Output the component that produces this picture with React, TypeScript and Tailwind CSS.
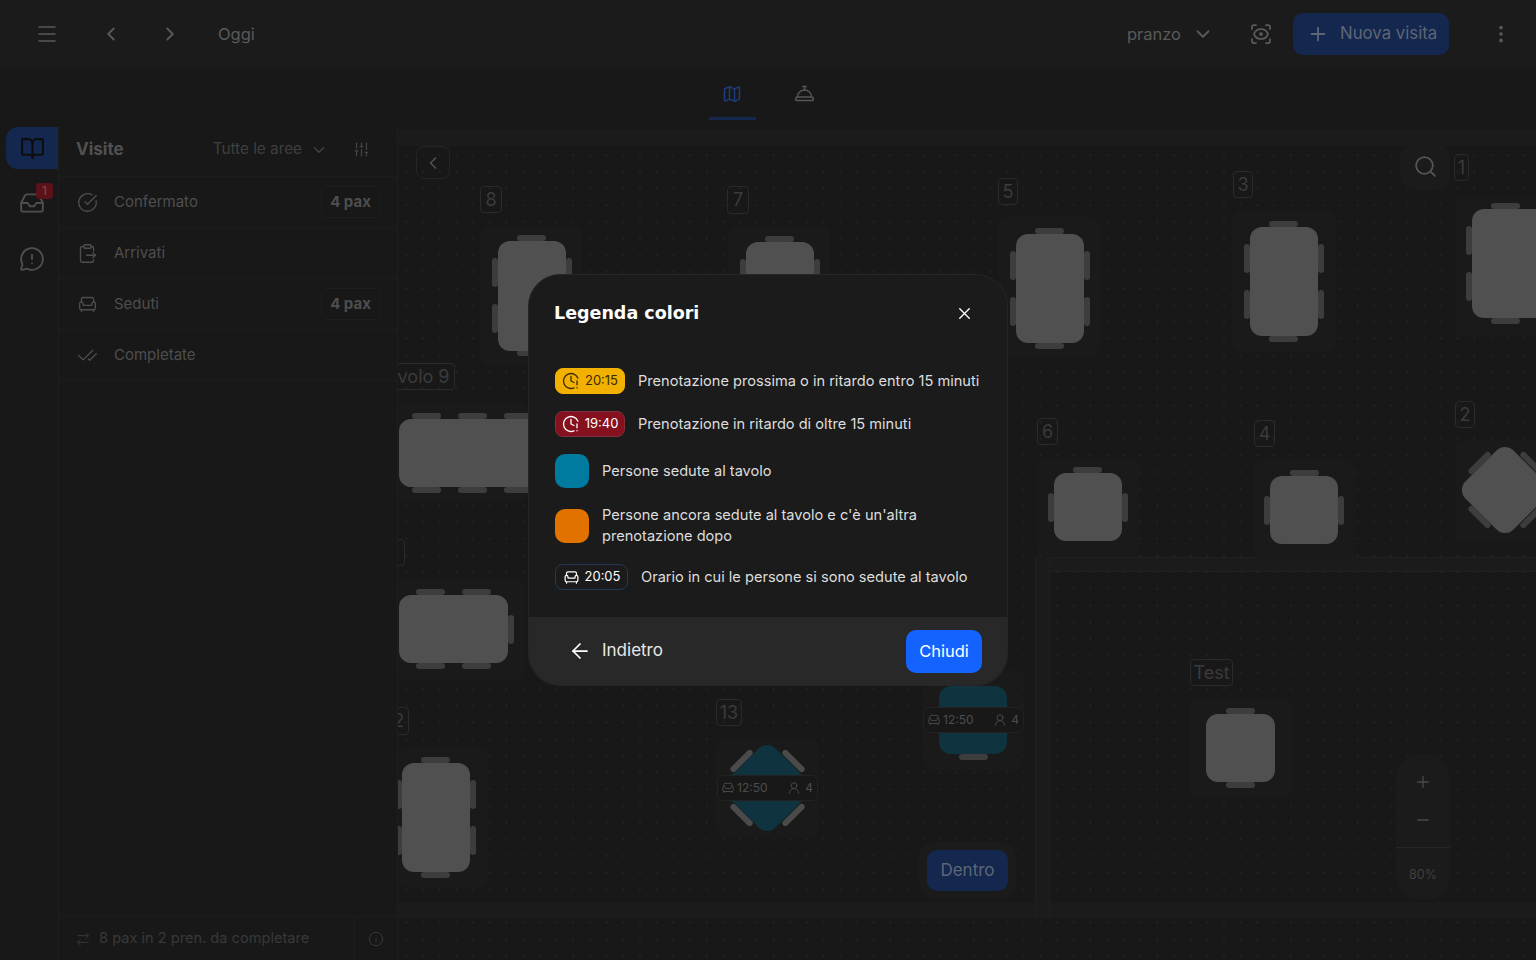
import {
  ArrowLeft,
  ArrowRightLeft,
  Armchair,
  BookOpen,
  CheckCheck,
  ChevronDown,
  ChevronLeft,
  ChevronRight,
  CircleCheckBig,
  ClockAlert,
  ConciergeBell,
  EllipsisVertical,
  Inbox,
  Info,
  Map as MapIcon,
  Menu,
  MessageCircleWarning,
  Minus,
  Plus,
  ScanEye,
  Search,
  SlidersVertical,
  UserRound,
  X,
} from "lucide-react";

// canvas starts at x=398, y=130 of the page
const OX = 398;
const OY = 130;

type Box = { x: number; y: number; w: number; h: number };

type Table = {
  label?: string;
  labelBox?: Box;
  tile: Box;
  top: Box;
  chairs: { x: number; y: number; side?: boolean }[];
  teal?: boolean;
};

const tall = (x: number, y: number) => [
  { x: x + 19, y: y - 6 },
  { x: x + 19, y: y + 109 },
  { x: x - 6, y: y + 17, side: true },
  { x: x - 6, y: y + 63, side: true },
  { x: x + 68, y: y + 17, side: true },
  { x: x + 68, y: y + 63, side: true },
];

const tables: Table[] = [
  {
    label: "8",
    labelBox: { x: 480, y: 186, w: 22, h: 27 },
    tile: { x: 480, y: 226, w: 102, h: 140 },
    top: { x: 498, y: 241, w: 68, h: 110 },
    chairs: tall(498, 241),
  },
  {
    label: "7",
    labelBox: { x: 727, y: 186, w: 22, h: 28 },
    tile: { x: 728, y: 226, w: 102, h: 60 },
    top: { x: 746, y: 242, w: 68, h: 110 },
    chairs: tall(746, 242),
  },
  {
    label: "5",
    labelBox: { x: 998, y: 178, w: 20, h: 27 },
    tile: { x: 998, y: 217, w: 102, h: 141 },
    top: { x: 1016, y: 234, w: 68, h: 109 },
    chairs: tall(1016, 234),
  },
  {
    label: "3",
    labelBox: { x: 1233, y: 171, w: 20, h: 27 },
    tile: { x: 1233, y: 210, w: 102, h: 142 },
    top: { x: 1250, y: 227, w: 68, h: 109 },
    chairs: tall(1250, 227),
  },
  {
    label: "1",
    labelBox: { x: 1454, y: 154, w: 15, h: 27 },
    tile: { x: 1455, y: 197, w: 102, h: 140 },
    top: { x: 1472, y: 209, w: 90, h: 109 },
    chairs: [
      { x: 1491, y: 203 },
      { x: 1491, y: 318 },
      { x: 1466, y: 226, side: true },
      { x: 1466, y: 272, side: true },
    ],
  },
  {
    label: "6",
    labelBox: { x: 1037, y: 418, w: 21, h: 27 },
    tile: { x: 1037, y: 458, w: 102, h: 98 },
    top: { x: 1054, y: 473, w: 68, h: 68 },
    chairs: [
      { x: 1073, y: 467 },
      { x: 1048, y: 493, side: true },
      { x: 1122, y: 493, side: true },
    ],
  },
  {
    label: "4",
    labelBox: { x: 1254, y: 420, w: 21, h: 27 },
    tile: { x: 1254, y: 460, w: 101, h: 100 },
    top: { x: 1270, y: 476, w: 68, h: 68 },
    chairs: [
      { x: 1290, y: 470 },
      { x: 1264, y: 496, side: true },
      { x: 1338, y: 496, side: true },
    ],
  },
  {
    label: "Test",
    labelBox: { x: 1190, y: 659, w: 43, h: 27 },
    tile: { x: 1190, y: 698, w: 102, h: 100 },
    top: { x: 1206, y: 714, w: 69, h: 68 },
    chairs: [
      { x: 1226, y: 708 },
      { x: 1226, y: 782 },
    ],
  },
  {
    label: "Tavolo 9",
    labelBox: { x: 372, y: 363, w: 83, h: 27 },
    tile: { x: 398, y: 402, w: 130, h: 100 },
    top: { x: 399, y: 419, w: 140, h: 68 },
    chairs: [
      { x: 412, y: 413 },
      { x: 458, y: 413 },
      { x: 504, y: 413 },
      { x: 412, y: 487 },
      { x: 458, y: 487 },
      { x: 504, y: 487 },
    ],
  },
  {
    labelBox: { x: 380, y: 539, w: 25, h: 27 },
    tile: { x: 398, y: 578, w: 127, h: 102 },
    top: { x: 399, y: 595, w: 109, h: 68 },
    chairs: [
      { x: 416, y: 589 },
      { x: 462, y: 589 },
      { x: 416, y: 663 },
      { x: 462, y: 663 },
      { x: 508, y: 615, side: true },
    ],
  },
  {
    label: "12",
    labelBox: { x: 381, y: 707, w: 28, h: 28 },
    tile: { x: 398, y: 747, w: 90, h: 140 },
    top: { x: 402, y: 763, w: 68, h: 109 },
    chairs: tall(402, 763),
  },
  {
    tile: { x: 923, y: 670, w: 100, h: 100 },
    top: { x: 939, y: 686, w: 68, h: 68 },
    chairs: [{ x: 959, y: 754 }],
    teal: true,
  },
];

function TableLabel({ box, text }: { box: Box; text?: string }) {
  return (
    <div
      className="absolute flex items-center justify-center overflow-hidden whitespace-nowrap rounded border border-[#2a2a2a] text-[18px] leading-none text-[#3b3b3b]"
      style={{ left: box.x - OX, top: box.y - OY, width: box.w, height: box.h }}
    >
      {text}
    </div>
  );
}

function FloorTable({ table }: { table: Table }) {
  const { tile, top, chairs, teal, label, labelBox } = table;
  return (
    <>
      {labelBox && <TableLabel box={labelBox} text={label} />}
      <div
        className="absolute rounded-lg bg-[#1a1a1a]"
        style={{ left: tile.x - OX, top: tile.y - OY, width: tile.w, height: tile.h }}
      />
      {chairs.map((c, i) => (
        <div
          key={i}
          className={
            c.side
              ? "absolute h-[29px] w-[6px] rounded-[3px] bg-[#3d3d3d]"
              : "absolute h-[6px] w-[29px] rounded-[3px] bg-[#3d3d3d]"
          }
          style={{ left: c.x - OX, top: c.y - OY }}
        />
      ))}
      <div
        className={teal ? "absolute rounded-xl bg-[#10343f]" : "absolute rounded-xl bg-[#505050]"}
        style={{ left: top.x - OX, top: top.y - OY, width: top.w, height: top.h }}
      />
    </>
  );
}

function Diamond({ cx, cy, teal }: { cx: number; cy: number; teal?: boolean }) {
  const bars = [
    { x: -26, y: -27, r: -45 },
    { x: 26, y: -27, r: 45 },
    { x: -26, y: 27, r: 45 },
    { x: 26, y: 27, r: -45 },
  ];
  return (
    <>
      {bars.map((b, i) => (
        <div
          key={i}
          className={
            teal
              ? "absolute h-[6px] w-[29px] rounded-[3px] bg-[#4a4a4a]"
              : "absolute h-[6px] w-[29px] rounded-[3px] bg-[#3d3d3d]"
          }
          style={{
            left: cx - OX + b.x - 14.5,
            top: cy - OY + b.y - 3,
            transform: `rotate(${b.r}deg)`,
          }}
        />
      ))}
      <div
        className={
          teal
            ? "absolute h-[68px] w-[68px] rotate-45 rounded-xl bg-[#10343f]"
            : "absolute h-[68px] w-[68px] rotate-45 rounded-xl bg-[#505050]"
        }
        style={{ left: cx - OX - 34, top: cy - OY - 34 }}
      />
    </>
  );
}

function SeatChip({ x, y }: { x: number; y: number }) {
  return (
    <div
      className="absolute flex h-[26px] w-[101px] items-center rounded-md border border-[#222222] bg-[#181818] pl-[3px] pr-[4px] text-[12px] text-[#4d4d4d]"
      style={{ left: x - OX, top: y - OY }}
    >
      <Armchair size={14} strokeWidth={1.5} />
      <span className="ml-[2px]">12:50</span>
      <UserRound size={14} strokeWidth={1.5} className="ml-auto" />
      <span className="ml-[4px]">4</span>
    </div>
  );
}

function SideRow({
  icon,
  text,
  pax,
}: {
  icon: React.ReactNode;
  text: string;
  pax?: boolean;
}) {
  return (
    <div className="flex h-[51px] items-center border-b border-[#1d1d1d] px-[17px]">
      <div className="flex w-[22px] justify-center text-[#4e4e4e]">{icon}</div>
      <span className="ml-[16px] text-[15px] text-[#4e4e4e]">{text}</span>
      {pax && (
        <div className="ml-auto flex h-[32px] w-[59px] items-center justify-center rounded-md border border-[#1e1e1e] text-[15px] font-bold text-[#4e4e4e]">
          4 pax
        </div>
      )}
    </div>
  );
}

function LegendPill({
  className,
  icon,
  time,
}: {
  className: string;
  icon: React.ReactNode;
  time: string;
}) {
  return (
    <div
      className={
        "flex h-[26px] shrink-0 items-center justify-center gap-[5px] rounded-lg border text-[13px] " +
        className
      }
    >
      {icon}
      <span>{time}</span>
    </div>
  );
}

function LegendText({ children }: { children: React.ReactNode }) {
  return <p className="text-[14.6px] leading-[21px] text-[#dedede]">{children}</p>;
}

function Legend() {
  return (
    <div className="absolute left-[528px] top-[274px] z-20 flex h-[412px] w-[480px] flex-col overflow-hidden rounded-[32px] border border-[#262626] bg-[#1b1b1b]">
      <div className="flex items-center justify-between pl-[25px] pr-[33px] pt-[26px]">
        <h2 className="text-[17.5px] font-bold leading-[24px] text-white [font-family:'DejaVu_Sans',sans-serif]">
          Legenda colori
        </h2>
        <X size={19} strokeWidth={1.75} className="text-white" />
      </div>
      <div className="flex flex-col gap-[17px] pl-[26px] pr-[20px] pt-[43px]">
        <div className="flex items-center gap-[13px]">
          <LegendPill
            className="w-[70px] border-[#f2b100] bg-[#f2b100] text-[#3b2a00]"
            icon={<ClockAlert size={18} strokeWidth={1.75} />}
            time="20:15"
          />
          <LegendText>Prenotazione prossima o in ritardo entro 15 minuti</LegendText>
        </div>
        <div className="flex items-center gap-[13px]">
          <LegendPill
            className="w-[70px] border-[#7f3040] bg-[#85101e] text-white"
            icon={<ClockAlert size={18} strokeWidth={1.75} />}
            time="19:40"
          />
          <LegendText>Prenotazione in ritardo di oltre 15 minuti</LegendText>
        </div>
        <div className="flex items-center gap-[13px]">
          <div className="h-[34px] w-[34px] shrink-0 rounded-[10px] bg-[#007a9e]" />
          <LegendText>Persone sedute al tavolo</LegendText>
        </div>
        <div className="flex items-center gap-[13px]">
          <div className="h-[34px] w-[34px] shrink-0 rounded-[10px] bg-[#e27200]" />
          <LegendText>
            Persone ancora sedute al tavolo e c'è un'altra
            <br />
            prenotazione dopo
          </LegendText>
        </div>
        <div className="flex items-center gap-[13px]">
          <LegendPill
            className="w-[73px] border-[#1f3a55] bg-transparent text-white"
            icon={<Armchair size={17} strokeWidth={1.75} />}
            time="20:05"
          />
          <LegendText>Orario in cui le persone si sono sedute al tavolo</LegendText>
        </div>
      </div>
      <div className="mt-auto flex h-[68px] items-center bg-[#282828] pl-[39px] pr-[25px]">
        <ArrowLeft size={24} strokeWidth={1.75} className="text-white" />
        <span className="ml-[10px] text-[17px] text-[#e8e8e8]">Indietro</span>
        <button className="ml-auto h-[43px] w-[76px] rounded-[10px] bg-[#1463ff] text-[16.5px] text-white">
          Chiudi
        </button>
      </div>
    </div>
  );
}

export default function App() {
  return (
    <div className="relative flex h-screen w-full flex-col overflow-hidden bg-[#181818] font-['Inter',sans-serif]">
      {/* Top bar */}
      <header className="flex h-[67px] shrink-0 items-center bg-[#1b1b1b] pl-[35px] pr-[24px] pt-px text-[#5a5a5a]">
        <Menu size={24} strokeWidth={1.5} />
        <ChevronLeft size={22} strokeWidth={2} className="ml-[41px]" />
        <ChevronRight size={22} strokeWidth={2} className="ml-[37px]" />
        <span className="ml-[37px] text-[16.5px]">Oggi</span>
        <span className="ml-auto text-[16.5px]">pranzo</span>
        <ChevronDown size={22} strokeWidth={2} className="ml-[11px]" />
        <ScanEye size={24} strokeWidth={1.75} className="ml-[35px]" />
        <button className="ml-[20px] flex h-[42px] w-[156px] items-center gap-[11px] rounded-[10px] bg-[#14274f] pl-[14px] text-[16.8px] text-[#5e6675]">
          <Plus size={22} strokeWidth={2} />
          Nuova visita
        </button>
        <EllipsisVertical size={22} strokeWidth={2} className="ml-[41px]" />
      </header>

      {/* View tabs */}
      <div className="flex h-[60px] shrink-0 justify-center gap-[25px]">
        <div className="flex h-[53px] w-[47px] items-center justify-center border-b-[3px] border-[#14274f] pt-[3px] text-[#1f3d7a]">
          <MapIcon size={20} strokeWidth={1.75} />
        </div>
        <div className="flex h-[53px] w-[47px] items-center justify-center border-b-[3px] border-transparent pt-[3px] text-[#555555]">
          <ConciergeBell size={21} strokeWidth={1.75} />
        </div>
      </div>

      <div className="flex min-h-0 flex-1">
        {/* Rail */}
        <nav className="flex w-[58px] shrink-0 flex-col items-end text-[#4e4e4e]">
          <div className="flex h-[42px] w-[52px] items-center justify-center rounded-l-xl bg-[#14274f] text-[#0d0d0d]">
            <BookOpen size={25} strokeWidth={2} />
          </div>
          <div className="relative mt-[20px] flex h-[28px] w-[52px] items-center justify-center">
            <Inbox size={26} strokeWidth={1.75} />
            <span className="absolute left-[30px] top-[-6px] flex h-[16px] w-[17px] items-center justify-center rounded bg-[#5c1218] text-[12px] text-[#7c4a4e]">
              1
            </span>
          </div>
          <div className="mt-[29px] flex w-[52px] justify-center">
            <MessageCircleWarning size={26} strokeWidth={1.75} />
          </div>
        </nav>

        {/* Visits panel */}
        <aside className="flex w-[340px] shrink-0 flex-col border-x border-[#1d1d1d]">
          <div className="flex h-[50px] items-center border-b border-[#1d1d1d] pb-[4px] pl-[17px] pr-[27px]">
            <span className="text-[17px] font-bold text-[#505050]">Visite</span>
            <span className="ml-auto text-[15.3px] text-[#3f3f3f]">Tutte le aree</span>
            <ChevronDown size={18} strokeWidth={1.75} className="ml-[8px] text-[#444444]" />
            <SlidersVertical size={17} strokeWidth={1.75} className="ml-[25px] text-[#444444]" />
          </div>
          <SideRow icon={<CircleCheckBig size={21} strokeWidth={1.5} />} text="Confermato" pax />
          <SideRow
            icon={
              <svg width="21" height="21" viewBox="0 0 24 24" fill="none" stroke="currentColor" strokeWidth="1.5" strokeLinecap="round" strokeLinejoin="round">
                <rect x="8" y="2" width="8" height="4" rx="1" />
                <path d="M16 4h1a2 2 0 0 1 2 2v3" />
                <path d="M8 4H6a2 2 0 0 0-2 2v14a2 2 0 0 0 2 2h11a2 2 0 0 0 2-2v-1" />
                <path d="M11 14h10" />
                <path d="m18 11 3 3-3 3" />
              </svg>
            }
            text="Arrivati"
          />
          <SideRow icon={<Armchair size={21} strokeWidth={1.5} />} text="Seduti" pax />
          <SideRow icon={<CheckCheck size={21} strokeWidth={1.5} />} text="Completate" />
          <div className="mt-auto flex h-[44px] items-center border-t border-[#1d1d1d] pl-[16px] text-[#383838]">
            <ArrowRightLeft size={16} strokeWidth={1.5} />
            <span className="ml-[8px] text-[14.6px]">8 pax in 2 pren. da completare</span>
            <div className="ml-auto flex h-full w-[43px] items-center justify-center border-l border-[#1d1d1d]">
              <Info size={16} strokeWidth={1.5} />
            </div>
          </div>
        </aside>

        {/* Floor plan */}
        <main className="relative mt-[3px] min-w-0 flex-1 overflow-hidden bg-[radial-gradient(#212121_1px,transparent_1px)] [background-size:16.7px_16.7px]">
          {/* walls */}
          <div className="absolute inset-x-0 top-0 h-[16px] bg-[#1b1b1b]" />
          <div className="absolute inset-x-0 top-[772px] h-[16px] bg-[#1b1b1b]" />
          <div className="absolute left-[637px] right-0 top-[427px] h-[15px] border-y border-[#202020] bg-[#1b1b1b]" />
          <div className="absolute bottom-[42px] left-[637px] top-[427px] w-[15px] border-x border-[#202020] bg-[#1b1b1b]" />

          {tables.map((t, i) => (
            <FloorTable key={i} table={t} />
          ))}

          {/* diamond tables */}
          <div className="absolute left-[1057px] top-[310px] h-[100px] w-[90px] rounded-lg bg-[#1a1a1a]" />
          <Diamond cx={1505} cy={490} />
          <TableLabel box={{ x: 1455, y: 401, w: 20, h: 27 }} text="2" />

          <div className="absolute left-[318px] top-[608px] h-[100px] w-[102px] rounded-lg bg-[#1a1a1a]" />
          <TableLabel box={{ x: 716, y: 699, w: 26, h: 27 }} text="13" />
          <Diamond cx={767} cy={788} teal />
          <SeatChip x={717} y={775} />
          <SeatChip x={923} y={707} />

          {/* Floating controls */}
          <button className="absolute left-[18px] top-[16px] flex h-[33px] w-[34px] items-center justify-center rounded-lg border border-[#252525] text-[#505050]">
            <ChevronLeft size={20} strokeWidth={2} />
          </button>
          <div className="absolute left-[1002px] top-[13px] flex h-[47px] w-[50px] items-center justify-center rounded-2xl bg-[#1b1b1b] text-[#555555]">
            <Search size={25} strokeWidth={1.75} />
          </div>
          <div className="absolute left-[521px] top-[712px] flex h-[57px] w-[97px] items-center justify-center rounded-2xl bg-[#1b1b1b]">
            <div className="flex h-[41px] w-[81px] items-center justify-center rounded-[10px] bg-[#14274f] text-[17px] text-[#5e6675]">
              Dentro
            </div>
          </div>
          <div className="absolute left-[998px] top-[624px] flex h-[146px] w-[54px] flex-col items-center rounded-3xl bg-[#1b1b1b] text-[#4a4a4a]">
            <Plus size={18} strokeWidth={1.75} className="mt-[19px]" />
            <Minus size={18} strokeWidth={1.75} className="mt-[20px]" />
            <div className="mt-[18px] h-px w-full bg-[#262626]" />
            <span className="mt-[18px] text-[12.5px] text-[#404040]">80%</span>
          </div>
        </main>
      </div>

      <Legend />
    </div>
  );
}
